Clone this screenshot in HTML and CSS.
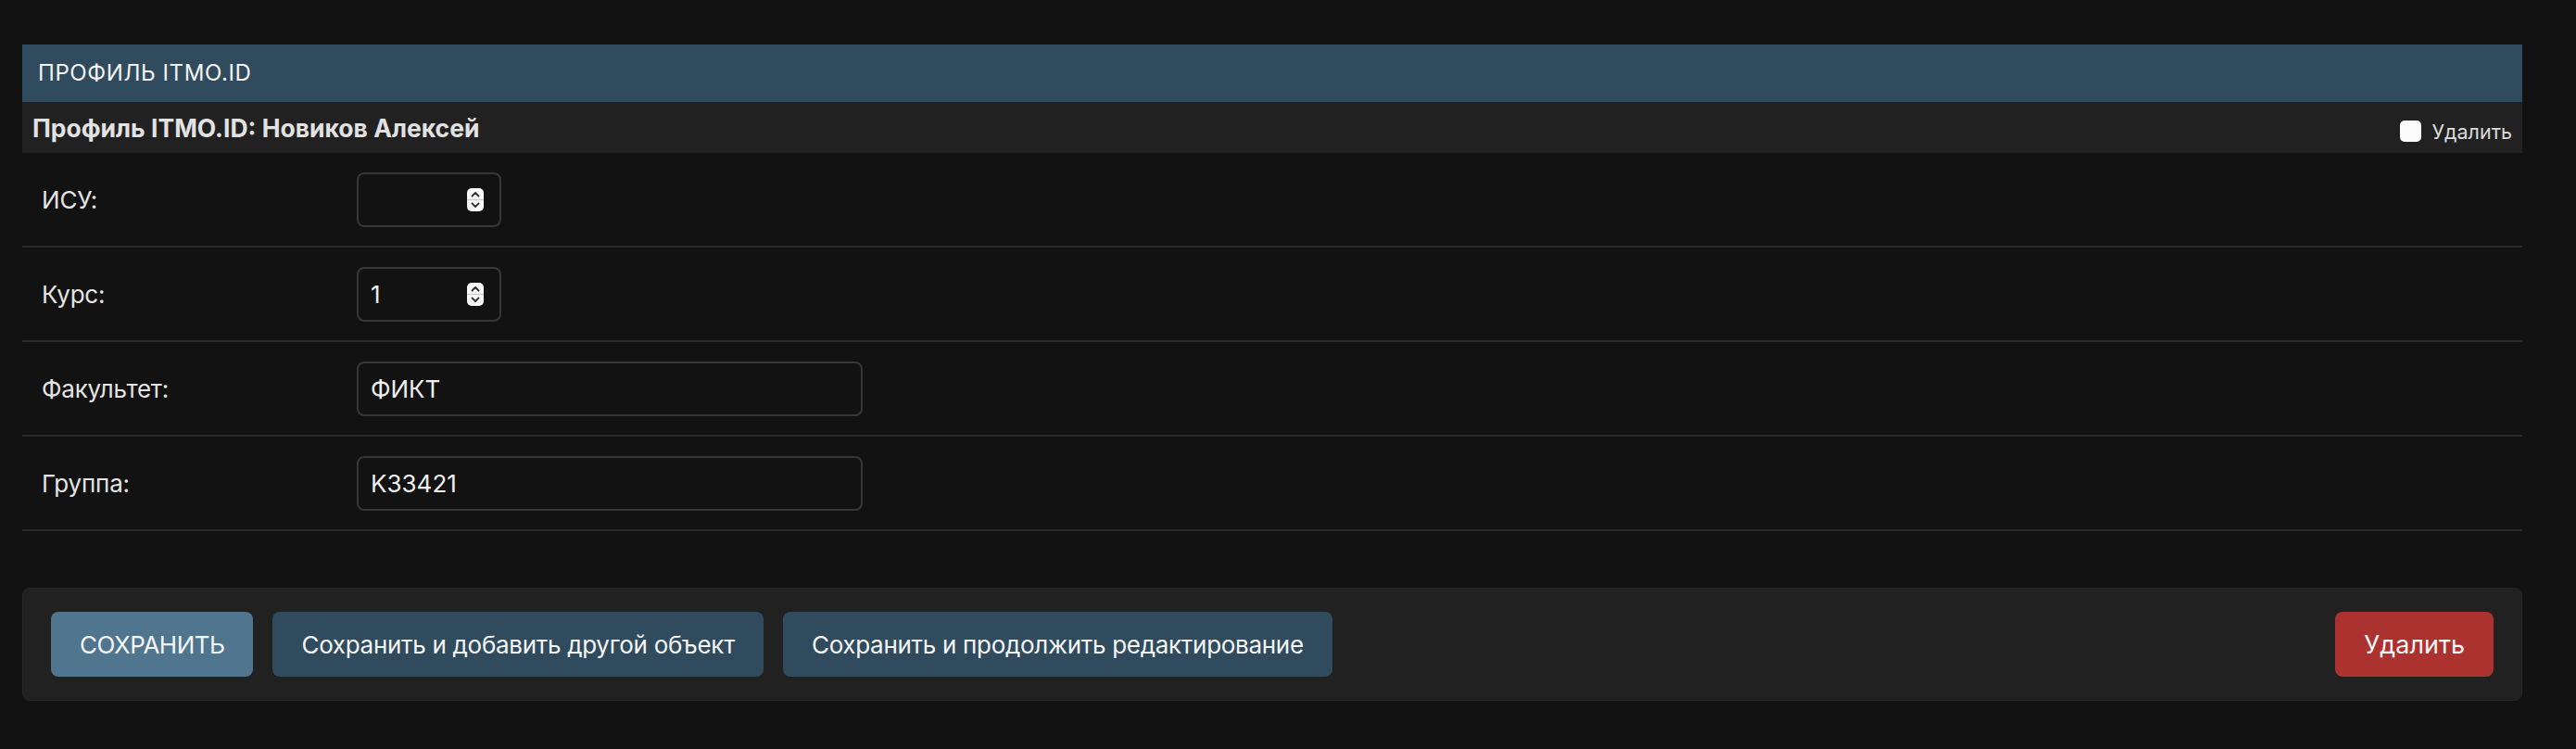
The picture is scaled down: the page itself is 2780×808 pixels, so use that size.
FILE: index.html
```html
<!DOCTYPE html>
<html lang="ru">
<head>
<meta charset="utf-8">
<title>Профиль ITMO.ID</title>
<link rel="stylesheet" href="styles.css">
</head>
<body>
<div class="page">
  <fieldset class="module">
    <div class="caption">ПРОФИЛЬ ITMO.ID</div>
    <div class="inline-head">
      <span class="inline-title">Профиль ITMO.ID: Новиков Алексей</span>
      <label class="delete-check"><span class="box"></span><span>Удалить</span></label>
    </div>
    <div class="form-row">
      <label class="field-label">ИСУ:</label>
      <div class="numbox">
        <span class="num-value"></span>
        <svg class="spin" width="18" height="25" viewBox="0 0 18 25"><rect x="0" y="0" width="18" height="25" rx="5" fill="#fafafa"/><line x1="0" y1="12.5" x2="18" y2="12.5" stroke="#cfcfcf" stroke-width="1.5"/><path d="M5.5 8.5 L9 5 L12.5 8.5" fill="none" stroke="#333" stroke-width="1.8" stroke-linecap="round" stroke-linejoin="round"/><path d="M5.5 16.5 L9 20 L12.5 16.5" fill="none" stroke="#333" stroke-width="1.8" stroke-linecap="round" stroke-linejoin="round"/></svg>
      </div>
    </div>
    <div class="form-row">
      <label class="field-label">Курс:</label>
      <div class="numbox">
        <span class="num-value">1</span>
        <svg class="spin" width="18" height="25" viewBox="0 0 18 25"><rect x="0" y="0" width="18" height="25" rx="5" fill="#fafafa"/><line x1="0" y1="12.5" x2="18" y2="12.5" stroke="#cfcfcf" stroke-width="1.5"/><path d="M5.5 8.5 L9 5 L12.5 8.5" fill="none" stroke="#333" stroke-width="1.8" stroke-linecap="round" stroke-linejoin="round"/><path d="M5.5 16.5 L9 20 L12.5 16.5" fill="none" stroke="#333" stroke-width="1.8" stroke-linecap="round" stroke-linejoin="round"/></svg>
      </div>
    </div>
    <div class="form-row">
      <label class="field-label">Факультет:</label>
      <div class="textbox">ФИКТ</div>
    </div>
    <div class="form-row">
      <label class="field-label">Группа:</label>
      <div class="textbox">K33421</div>
    </div>
  </fieldset>

  <div class="submit-row">
    <button class="btn btn-default">СОХРАНИТЬ</button>
    <button class="btn">Сохранить и добавить другой объект</button>
    <button class="btn">Сохранить и продолжить редактирование</button>
    <span class="spacer"></span>
    <button class="btn btn-delete">Удалить</button>
  </div>
</div>
</body>
</html>
```

FILE: styles.css
```css
html, body {
  margin: 0;
  padding: 0;
  background: #121212;
}
body {
  font-family: Inter, "Noto Sans", "DejaVu Sans", sans-serif;
  color: #eeeeee;
  width: 2780px;
  height: 808px;
  overflow: hidden;
}
.page {
  padding: 48px 58px 0 24px;
}
.module {
  margin: 0;
  padding: 0;
  border: 0;
  min-width: 0;
}
.caption {
  height: 62px;
  background: #2f4b5d;
  color: #f4f4f4;
  font-size: 24px;
  letter-spacing: 0.6px;
  line-height: 62px;
  padding-left: 17px;
}
.inline-head {
  height: 55px;
  background: #212121;
  display: flex;
  align-items: center;
  justify-content: space-between;
  padding: 0 11px 0 11px;
}
.inline-title {
  font-weight: 700;
  font-size: 26.5px;
  color: #e2e2e2;
}
.delete-check {
  display: flex;
  align-items: center;
  gap: 11px;
  font-size: 21.5px;
  color: #dcdcdc;
  margin-top: 8px;
}
.delete-check .box {
  width: 23px;
  height: 23px;
  border-radius: 5px;
  background: #fbfbfb;
}
.form-row {
  display: flex;
  align-items: center;
  padding: 21px 21px 20px 21px;
  border-bottom: 2px solid #2a2a2a;
}
.field-label {
  width: 340px;
  flex: none;
  font-size: 26px;
  letter-spacing: -0.2px;
  color: #e4e4e4;
}
.numbox, .textbox {
  box-sizing: border-box;
  height: 59px;
  border: 2px solid #373737;
  border-radius: 8px;
  background: #121212;
  display: flex;
  align-items: center;
  padding: 0 13px;
  font-size: 26px;
  color: #eeeeee;
}
.numbox {
  width: 156px;
  justify-content: space-between;
  padding-right: 17px;
}
.textbox {
  width: 546px;
}
.spin {
  display: block;
  flex: none;
}
.submit-row {
  margin-top: 61px;
  box-sizing: border-box;
  height: 122px;
  background: #212121;
  border: 1px solid #262626;
  border-radius: 8px;
  display: flex;
  align-items: center;
  gap: 21px;
  padding: 0 30px;
}
.spacer {
  flex: 1;
}
.btn {
  height: 70px;
  border: 0;
  border-radius: 8px;
  background: #2f4b5d;
  color: #f5f5f5;
  font-family: Inter, "Noto Sans", sans-serif;
  font-size: 26px;
  letter-spacing: -0.3px;
  padding: 0 31px;
  margin: 0;
}
.btn-default {
  background: #50758f;
  letter-spacing: -0.5px;
}
.btn-delete {
  background: #ab322f;
  font-size: 27px;
  letter-spacing: 0;
}
```
